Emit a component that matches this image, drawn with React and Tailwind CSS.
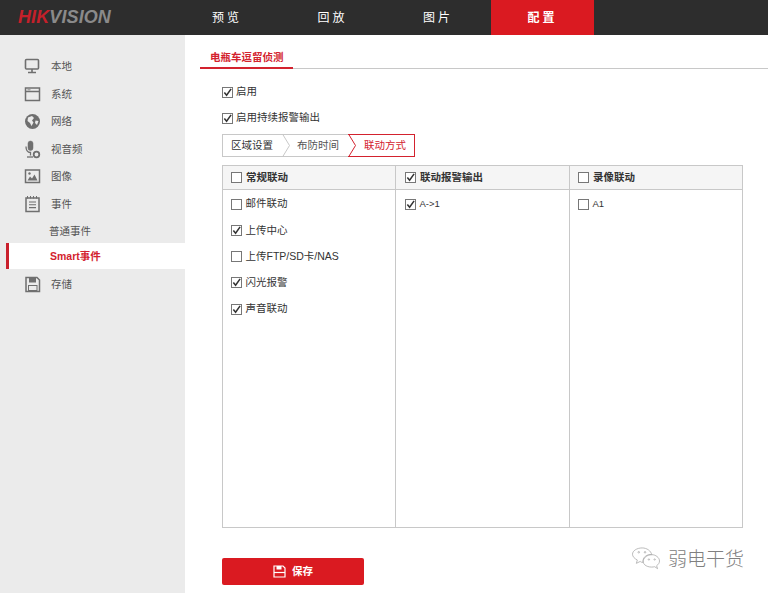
const cjk = { fontFamily: '"Liberation Sans","Noto Sans CJK SC",sans-serif' };

function Check({ on, size = 11 }) {
  return (
    <span className="flex shrink-0 items-center justify-center border border-[#777] bg-white" style={{ width: size, height: size }}>
      {on && (
        <svg width={size - 2} height={size - 2} viewBox="0 0 10 10" fill="none">
          <path d="M1.5 5 L4 8 L9 1" stroke="#333" strokeWidth="1.7" />
        </svg>
      )}
    </span>
  );
}

const ic = "#6f6f6f";
const icons = {
  monitor: (
    <svg width="17" height="17" viewBox="0 0 17 17" fill="none" stroke={ic}>
      <rect x="1.5" y="1.5" width="13" height="9.5" rx="1" strokeWidth="1.6" />
      <path d="M8 11v3M4 14.5h8" strokeWidth="1.6" />
    </svg>
  ),
  window: (
    <svg width="17" height="17" viewBox="0 0 17 17" fill="none" stroke={ic}>
      <rect x="1.5" y="2" width="14" height="12.5" strokeWidth="1.5" />
      <path d="M2 5.5h13" strokeWidth="1.5" />
      <path d="M3.5 3.8h3" strokeWidth="0.8" />
    </svg>
  ),
  globe: (
    <svg width="17" height="17" viewBox="0 0 17 17">
      <circle cx="8.5" cy="8.5" r="7.5" fill={ic} />
      <path d="M4 4.5 L8 3 L10 5 L8 7.5 L9.5 9.5 L7.5 13 L6 10 L3.5 8 Z M11.5 7.5 L14.5 8 L13 12 L11 10 Z" fill="#ebebeb" />
    </svg>
  ),
  mic: (
    <svg width="17" height="19" viewBox="0 0 17 19" fill="none" stroke={ic}>
      <rect x="4" y="1" width="5" height="9.5" rx="2.5" fill={ic} strokeWidth="0.5" />
      <path d="M2 6.5c0 4 1.5 6 4.5 6v3" strokeWidth="1.3" />
      <circle cx="12.5" cy="14.5" r="2.8" strokeWidth="1.8" />
      <path d="M3 17h6" strokeWidth="1.3" />
    </svg>
  ),
  image: (
    <svg width="17" height="17" viewBox="0 0 17 17" fill="none">
      <rect x="1.5" y="2" width="14" height="12.5" stroke={ic} strokeWidth="1.5" />
      <circle cx="5.5" cy="5.5" r="1.2" fill={ic} />
      <path d="M3.5 12.5 L6 8.5 L8 10.5 L10.5 6.5 L13.5 12.5 Z" fill={ic} />
    </svg>
  ),
  note: (
    <svg width="17" height="18" viewBox="0 0 17 18" fill="none" stroke={ic}>
      <rect x="2" y="3" width="13" height="13.5" strokeWidth="1.5" />
      <path d="M3.5 1v2.5M6.5 1v2.5M9.5 1v2.5M12.5 1v2.5" strokeWidth="1" />
      <path d="M5 7h7M5 9.8h7M5 12.6h7" strokeWidth="1.1" />
    </svg>
  ),
  disk: (
    <svg width="17" height="17" viewBox="0 0 17 17" fill="none">
      <path d="M2 1.500h11l2.500 2.500v11.500H2z" stroke={ic} strokeWidth="1.5" />
      <rect x="5" y="1.500" width="7" height="5" fill={ic} />
      <rect x="4.500" y="9.500" width="8.500" height="5" stroke={ic} />
    </svg>
  ),
};

function SideItem({ icon, label, extra }) {
  return (
    <div className={"flex h-[27.5px] items-center pl-[24px] " + (extra || "")}>
      <span className="flex w-[27px] shrink-0">{icons[icon]}</span>
      <span className="pt-[1px] text-[10.5px] text-[#555]">{label}</span>
    </div>
  );
}

function Row({ on, label, pad }) {
  const small = label.startsWith("A");
  return (
    <div className={"flex h-[26.25px] items-center gap-[3.5px] " + pad}>
      <Check on={on} />
      <span className={(small ? "text-[9.5px]" : "text-[10.5px]") + " text-[#333]"}>{label}</span>
    </div>
  );
}

function Col({ title, on, items, width, pad }) {
  return (
    <div className={"flex flex-col " + width}>
      <div className={"flex h-[24px] shrink-0 items-center gap-[4px] border-b border-[#c8c8c8] bg-[#f5f5f5] " + pad}>
        <Check on={on} size={11} />
        <span className="text-[10.5px] font-bold text-[#333]">{title}</span>
      </div>
      <div className="pt-px">
        {items.map((it) => (
          <Row key={it[0]} label={it[0]} on={it[1]} pad={pad} />
        ))}
      </div>
    </div>
  );
}

function Nav({ label, active, w }) {
  return (
    <div
      className={"flex h-full items-center justify-center text-[12px] tracking-[3px] text-white " + (active ? "bg-[#da1a21] font-bold" : "")}
      style={{ width: w }}
    >
      {label}
    </div>
  );
}

function Chev({ color }) {
  return (
    <svg className="absolute left-0 top-[-1px]" width="10" height="23" viewBox="0 0 10 23" fill="none">
      <path d="M0.5 0 L7.5 11.5 L0.5 23" stroke={color} />
    </svg>
  );
}

export default function App() {
  return (
    <div className="relative flex h-[593px] w-[768px] flex-col overflow-hidden bg-white" style={cjk}>
      <header className="flex h-[35px] shrink-0 bg-[#2d2d2d]">
        <div className="flex w-[174px] items-center pl-[18px]">
          <span className="text-[18px] font-bold italic tracking-[0.1px]" style={{ fontFamily: '"Liberation Sans",sans-serif' }}>
            <span className="text-[#c5202a]">HIK</span>
            <span className="text-[#8a8a8a]">VISION</span>
          </span>
        </div>
        <Nav label="预览" w={106} />
        <Nav label="回放" w={105} />
        <Nav label="图片" w={106} />
        <Nav label="配置" active w={103} />
      </header>

      <div className="flex flex-1">
        <aside className="w-[185px] shrink-0 bg-[#ebebeb] pt-[18px]">
          <SideItem icon="monitor" label="本地" />
          <SideItem icon="window" label="系统" />
          <SideItem icon="globe" label="网络" />
          <SideItem icon="mic" label="视音频" />
          <SideItem icon="image" label="图像" />
          <SideItem icon="note" label="事件" />
          <div className="flex h-[25px] items-center pl-[49px] pt-[2px] text-[10.5px] text-[#555]">普通事件</div>
          <div className="ml-[6px] flex h-[26px] items-center border-l-[3px] border-[#c9202c] bg-white pl-[41px] pt-[2px] text-[10.5px] font-bold text-[#d3222e]">
            Smart事件
          </div>
          <SideItem icon="disk" label="存储" extra="mt-[1.5px]" />
        </aside>

        <main className="min-w-0 flex-1 pl-[15px]">
          <div className="mt-[12px] flex h-[22px] border-b border-[#c8c8c8]">
            <div className="h-[22px] w-[93px] border-b-2 border-[#d3222e] pl-[10px] pt-[1px] text-[10.5px] font-bold leading-[18px] text-[#d3222e]">
              电瓶车逗留侦测
            </div>
          </div>

          <div className="ml-[22px]">
            <div className="mt-[13px] flex h-[20px] items-center gap-[3px]">
              <Check on />
              <span className="text-[10.5px] text-[#333]">启用</span>
            </div>
            <div className="mt-[6px] flex h-[20px] items-center gap-[3px]">
              <Check on />
              <span className="text-[10.5px] text-[#333]">启用持续报警输出</span>
            </div>

            <div className="mt-[6px] flex h-[23px] w-[193px] text-[10.5px]">
              <div className="flex w-[60px] items-center border-y border-l border-[#c8c8c8] pl-[8px] text-[#333]">区域设置</div>
              <div className="relative flex w-[66px] items-center border-y border-[#c8c8c8] pl-[15px] text-[#555]">
                <Chev color="#c8c8c8" />
                布防时间
              </div>
              <div className="relative flex flex-1 items-center border-y border-r border-[#d3222e] pl-[16px] text-[#d3222e]">
                <Chev color="#d3222e" />
                联动方式
              </div>
            </div>

            <div className="mt-[8px] flex h-[363px] w-[521px] border border-[#c8c8c8]">
              <Col
                title="常规联动"
                width="w-[173px] border-r border-[#c8c8c8]"
                pad="pl-[8px]"
                items={[
                  ["邮件联动", false],
                  ["上传中心", true],
                  ["上传FTP/SD卡/NAS", false],
                  ["闪光报警", true],
                  ["声音联动", true],
                ]}
              />
              <Col title="联动报警输出" on width="w-[174px] border-r border-[#c8c8c8]" pad="pl-[9px]" items={[["A->1", true]]} />
              <Col title="录像联动" width="flex-1" pad="pl-[8px]" items={[["A1", false]]} />
            </div>

            <button className="mt-[30px] flex h-[27px] w-[142px] items-center justify-center gap-[6px] rounded-[2px] bg-[#da1a21] text-[10.5px] font-bold text-white">
              <svg width="13" height="13" viewBox="0 0 13 13" fill="none">
                <path d="M1 1h9l2 2v9H1z" stroke="#fff" strokeWidth="1.2" />
                <rect x="3.5" y="1" width="5" height="3.5" fill="#fff" />
                <path d="M1 7.5h11" stroke="#fff" strokeWidth="1.2" />
              </svg>
              保存
            </button>
          </div>
        </main>
      </div>

      <div className="absolute left-[631px] top-[546px] flex items-center gap-[7px] text-[#808080]">
        <svg width="30" height="27" viewBox="0 0 30 28" fill="none" stroke="#a8a8a8" strokeWidth="0.8">
          <path d="M11 2c5 0 9 3 10 7-5-1-10 3-9 8-1 0-2 0-3-1l-4 2 1-3.500C3 13 1 11 1 8.500 1 5 5.500 2 11 2z" />
          <path d="M21 9c4 0 8 3 8 6.500 0 2-1 3.500-3 5l1 3-3-2c-4 1-11 0-12-5 0-4 4-7.500 9-7.500z" />
          <circle cx="7.500" cy="6.500" r="0.8" />
          <circle cx="14" cy="6.500" r="0.8" />
          <circle cx="18" cy="14" r="0.7" />
          <circle cx="24" cy="14" r="0.7" />
        </svg>
        <span className="text-[19px] font-light leading-[27px]">弱电干货</span>
      </div>
    </div>
  );
}
